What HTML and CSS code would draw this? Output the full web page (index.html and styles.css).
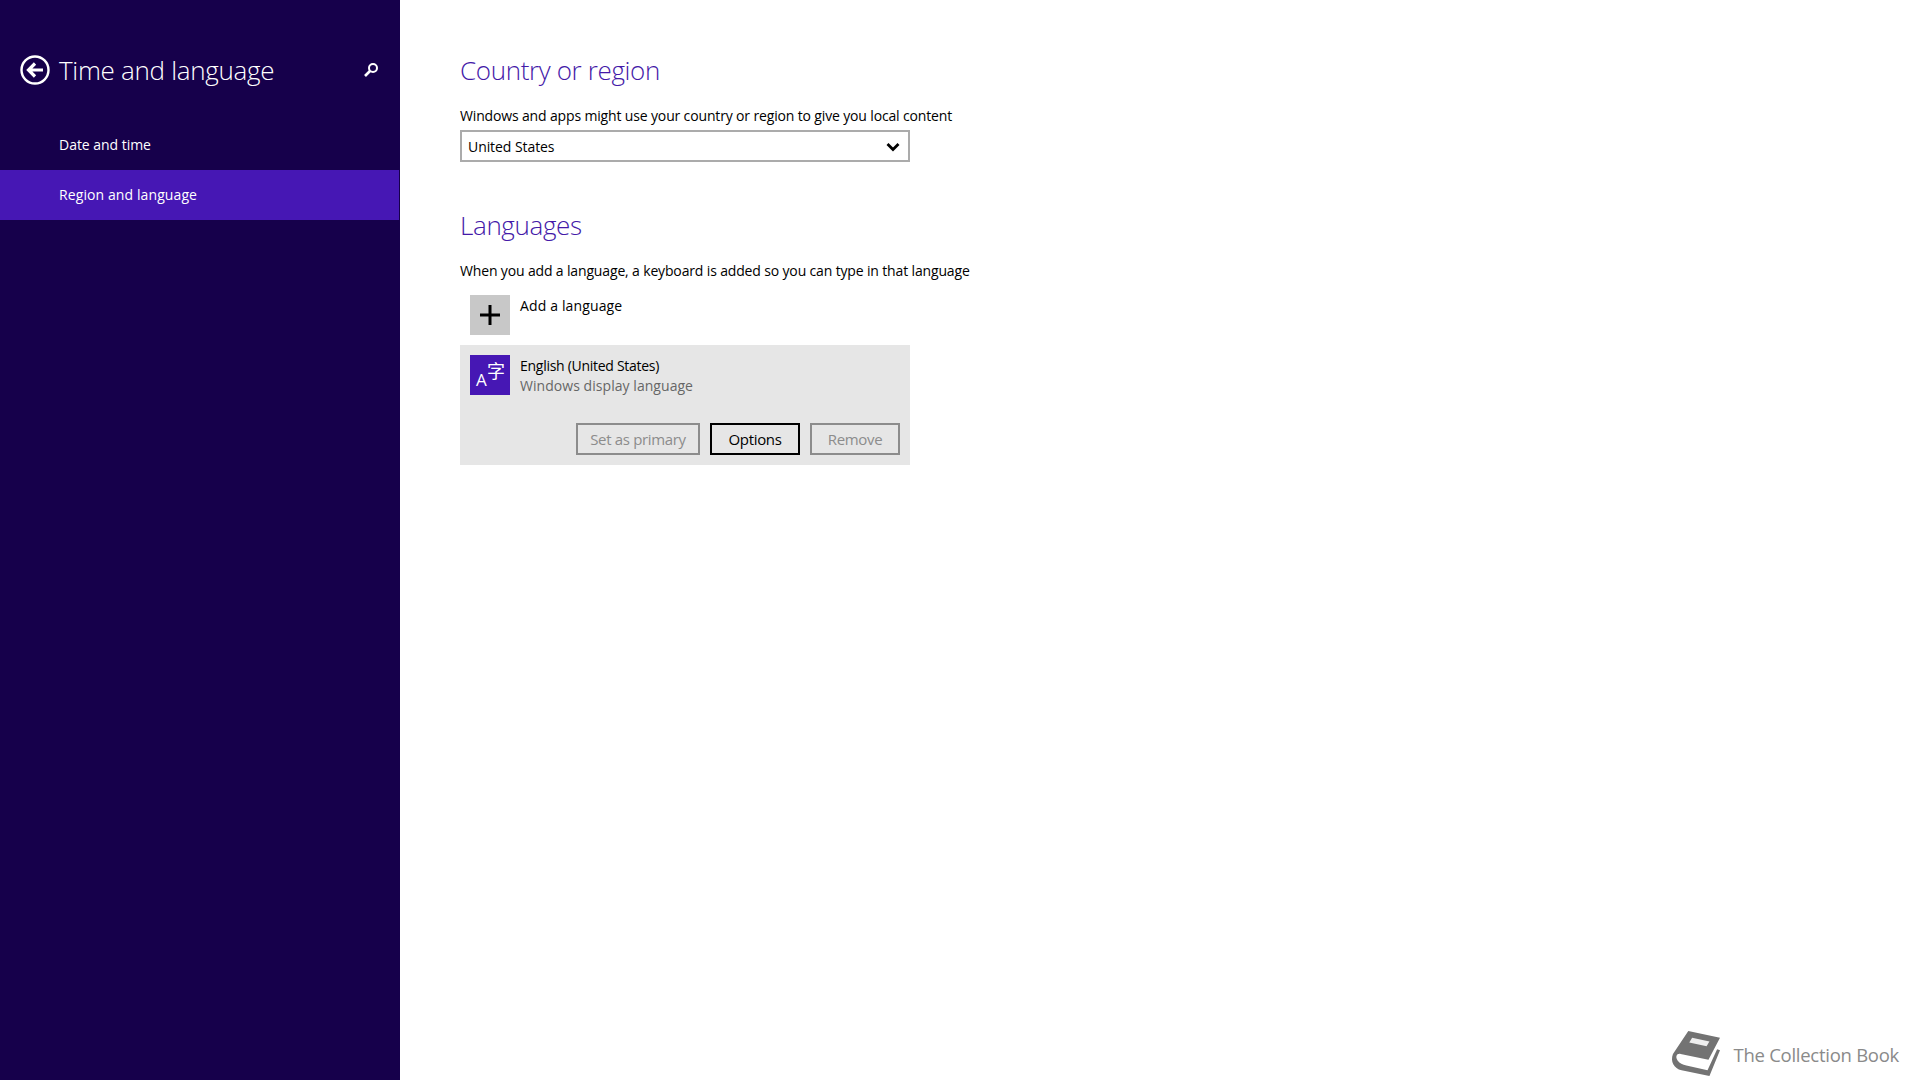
FILE: index.html
```html
<!DOCTYPE html>
<html lang="en">
<head>
<meta charset="utf-8">
<title>Time and language</title>
<link rel="stylesheet" href="styles.css">
</head>
<body>
<div class="app">
  <aside class="sidebar">
    <header class="side-head">
      <svg class="back" width="30" height="30" viewBox="0 0 30 30"><circle cx="15" cy="15" r="13.5" fill="none" stroke="#fff" stroke-width="2.4"/><path d="M23 15H9M15 8.5 8.5 15l6.5 6.5" fill="none" stroke="#fff" stroke-width="3.2"/></svg>
      <h1 class="side-title">Time and language</h1>
      <svg class="search" width="16" height="16" viewBox="0 0 16 16"><circle cx="10" cy="6" r="4" fill="none" stroke="#fff" stroke-width="2"/><path d="M7 9 2 14" stroke="#fff" stroke-width="2.6"/></svg>
    </header>
    <nav class="side-nav">
      <a class="nav-item">Date and time</a>
      <a class="nav-item active nav-region">Region and language</a>
    </nav>
  </aside>
  <main class="content">
    <section class="country">
      <h2 class="heading">Country or region</h2>
      <p class="desc">Windows and apps might use your country or region to give you local content</p>
      <div class="select">
        <span>United States</span>
        <svg class="chevron" width="14" height="10" viewBox="0 0 14 10"><path d="M1.5 2 7 7.5 12.5 2" fill="none" stroke="#000" stroke-width="2.8"/></svg>
      </div>
    </section>
    <section class="languages">
      <h2 class="heading">Languages</h2>
      <p class="desc desc-lang">When you add a language, a keyboard is added so you can type in that language</p>
      <div class="add-row">
        <div class="tile tile-add"><svg width="20" height="20" viewBox="0 0 20 20"><path d="M10 0v20M0 10h20" stroke="#000" stroke-width="3"/></svg></div>
        <span class="row-text add-text">Add a language</span>
      </div>
      <div class="lang-panel">
        <div class="lang-row">
          <div class="tile tile-lang"><span class="glyph-a">A</span><span class="glyph-zi">字</span></div>
          <div class="lang-text">
            <div class="row-text">English (United States)</div>
            <div class="row-sub">Windows display language</div>
          </div>
        </div>
        <div class="actions">
          <button class="btn btn-primary-off">Set as primary</button>
          <button class="btn btn-on">Options</button>
          <button class="btn btn-remove">Remove</button>
        </div>
      </div>
    </section>
  </main>
</div>
<footer class="watermark">
  <svg width="52" height="48" viewBox="0 0 54 50"><path d="M19 1 52 8 40 31 11 25C7 24 5 28 8 32 10 35 13 36 17 37L39 42 49 20 52 21 41 48 12 42C4 40 0 33 3 25Z" fill="#737373"/><path d="M23 8 41 12 38 17 20 13Z" fill="#eee"/></svg>
  <span>The Collection Book</span>
</footer>
</body>
</html>
```
FILE: styles.css
```css
* { box-sizing: border-box; }
html, body { margin: 0; height: 100%; overflow: hidden; }
body { background: #fff; font-family: "Open Sans", "Noto Sans", sans-serif; color: #000; }
.app { display: flex; height: 1080px; }
.sidebar { width: 400px; flex: none; background: #16004b; color: #fff; }
.side-head { display: flex; align-items: center; height: 40px; margin-top: 50px; padding: 0 20px; }
.back { flex: none; }
.side-title { flex: 1; margin: 0 0 0 9px; font-size: 26px; font-weight: 300; line-height: 40px; letter-spacing: -0.3px; white-space: nowrap; }
.search { flex: none; margin-right: 1px; }
.side-nav { display: flex; flex-direction: column; margin-top: 30px; }
.nav-item { display: flex; align-items: center; height: 50px; margin-right: 1px; padding: 0 0 2px 59px; font-size: 14px; letter-spacing: -0.03px; }
.nav-item.active { background: #4617b4; }
.nav-region { letter-spacing: 0.1px; }
.content { flex: 1; padding: 50px 0 0 60px; }
.heading { margin: 0 0 16px; font-size: 26px; font-weight: 300; line-height: 40px; color: #4419a8; letter-spacing: -0.36px; }
.desc { margin: 0 0 4px; font-size: 14px; line-height: 20px; letter-spacing: -0.15px; white-space: nowrap; }
.desc-lang { margin-bottom: 14px; }
.select { display: flex; align-items: center; justify-content: space-between; width: 450px; height: 32px; padding: 0 8px 0 6px; border: 2px solid #ababab; font-size: 14px; letter-spacing: -0.07px; }
.chevron { margin-top: 2px; }
.languages { margin-top: 43px; width: 450px; }
.add-row { display: flex; margin: 0 0 10px 10px; height: 40px; }
.tile { width: 40px; height: 40px; flex: none; }
.tile-add { display: flex; align-items: center; justify-content: center; background: #c8c8c8; }
.row-text { font-size: 14px; line-height: 20px; letter-spacing: -0.28px; white-space: nowrap; }
.add-text { margin: 1px 0 0 10px; letter-spacing: 0.14px; }
.lang-panel { height: 120px; padding: 10px; background: #e6e6e6; }
.lang-row { display: flex; height: 40px; }
.tile-lang { position: relative; background: #4617b4; color: #fff; }
.glyph-a { position: absolute; left: 6px; top: 14px; font-size: 17px; line-height: 22px; }
.glyph-zi { position: absolute; left: 17px; top: 2px; font-family: "Noto Sans CJK SC", sans-serif; font-size: 18px; line-height: 26px; }
.lang-text { margin: 1px 0 0 10px; }
.row-sub { margin-top: 0; font-size: 14px; line-height: 20px; letter-spacing: 0.05px; color: #666; white-space: nowrap; }
.actions { display: flex; justify-content: flex-end; gap: 10px; margin-top: 28px; }
.btn { height: 32px; padding: 0; background: transparent; border: 2px solid #8c8c8c; color: #8c8c8c; font: 400 15px "Open Sans", "Noto Sans", sans-serif; letter-spacing: -0.33px; }
.btn-primary-off { width: 124px; }
.btn-on { width: 90px; border-color: #000; color: #000; }
.btn-remove { width: 90px; }
.watermark { position: absolute; right: 21px; bottom: 2px; display: flex; align-items: center; gap: 12px; color: #8a8a8a; font-size: 18.5px; letter-spacing: -0.27px; }
```
